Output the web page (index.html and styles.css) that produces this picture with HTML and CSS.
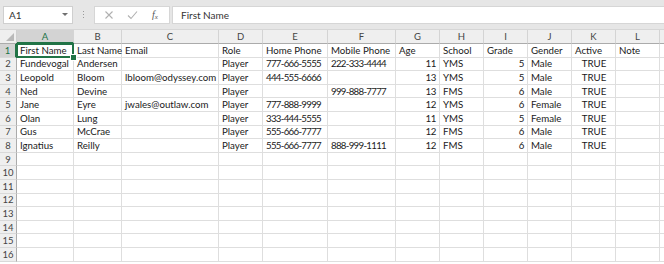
FILE: index.html
```html
<!DOCTYPE html>
<html>
<head>
<meta charset="utf-8">
<link rel="stylesheet" href="styles.css">
</head>
<body>
<div class="app">
  <div class="fbar">
    <div class="namebox"><span>A1</span><span class="caret"></span></div>
    <div class="dots"><i></i><i></i><i></i></div>
    <div class="btns">
      <svg class="ico" width="10" height="10" viewBox="0 0 10 10"><path d="M1.5 1.5L8.5 8.5M8.5 1.5L1.5 8.5" stroke="#b0b0b0" stroke-width="1.1" fill="none"/></svg>
      <svg class="ico" width="11" height="10" viewBox="0 0 11 10"><path d="M1 5.5L4 8.5L10 1.5" stroke="#b0b0b0" stroke-width="1.1" fill="none"/></svg>
      <span class="fx">f<sub>x</sub></span>
    </div>
    <div class="formula">First Name</div>
  </div>
  <div class="sheet">
    <div class="corner"><span class="tri"></span></div>
    <div class="ch sel">A</div><div class="ch">B</div><div class="ch">C</div><div class="ch">D</div><div class="ch">E</div><div class="ch">F</div><div class="ch">G</div><div class="ch">H</div><div class="ch">I</div><div class="ch">J</div><div class="ch">K</div><div class="ch">L</div><div class="ch"></div>

    <div class="rh sel">1</div><div class="c active">First Name<span class="selbox"><span class="handle"></span></span></div><div class="c">Last Name</div><div class="c">Email</div><div class="c">Role</div><div class="c">Home Phone</div><div class="c">Mobile Phone</div><div class="c">Age</div><div class="c">School</div><div class="c">Grade</div><div class="c">Gender</div><div class="c">Active</div><div class="c">Note</div><div class="c"></div>

    <div class="rh">2</div><div class="c">Fundevogal</div><div class="c">Andersen</div><div class="c"></div><div class="c">Player</div><div class="c ph">777-666-5555</div><div class="c ph">222-333-4444</div><div class="c n">11</div><div class="c">YMS</div><div class="c n">5</div><div class="c">Male</div><div class="c b">TRUE</div><div class="c"></div><div class="c"></div>

    <div class="rh">3</div><div class="c">Leopold</div><div class="c">Bloom</div><div class="c">lbloom@odyssey.com</div><div class="c">Player</div><div class="c ph">444-555-6666</div><div class="c"></div><div class="c n">13</div><div class="c">YMS</div><div class="c n">5</div><div class="c">Male</div><div class="c b">TRUE</div><div class="c"></div><div class="c"></div>

    <div class="rh">4</div><div class="c">Ned</div><div class="c">Devine</div><div class="c"></div><div class="c">Player</div><div class="c"></div><div class="c ph">999-888-7777</div><div class="c n">13</div><div class="c">FMS</div><div class="c n">6</div><div class="c">Male</div><div class="c b">TRUE</div><div class="c"></div><div class="c"></div>

    <div class="rh">5</div><div class="c">Jane</div><div class="c">Eyre</div><div class="c">jwales@outlaw.com</div><div class="c">Player</div><div class="c ph">777-888-9999</div><div class="c"></div><div class="c n">12</div><div class="c">YMS</div><div class="c n">6</div><div class="c">Female</div><div class="c b">TRUE</div><div class="c"></div><div class="c"></div>

    <div class="rh">6</div><div class="c">Olan</div><div class="c">Lung</div><div class="c"></div><div class="c">Player</div><div class="c ph">333-444-5555</div><div class="c"></div><div class="c n">11</div><div class="c">YMS</div><div class="c n">5</div><div class="c">Female</div><div class="c b">TRUE</div><div class="c"></div><div class="c"></div>

    <div class="rh">7</div><div class="c">Gus</div><div class="c">McCrae</div><div class="c"></div><div class="c">Player</div><div class="c ph">555-666-7777</div><div class="c"></div><div class="c n">12</div><div class="c">FMS</div><div class="c n">6</div><div class="c">Male</div><div class="c b">TRUE</div><div class="c"></div><div class="c"></div>

    <div class="rh">8</div><div class="c">Ignatius</div><div class="c">Reilly</div><div class="c"></div><div class="c">Player</div><div class="c ph">555-666-7777</div><div class="c ph">888-999-1111</div><div class="c n">12</div><div class="c">FMS</div><div class="c n">6</div><div class="c">Male</div><div class="c b">TRUE</div><div class="c"></div><div class="c"></div>

    <div class="rh">9</div><div class="c"></div><div class="c"></div><div class="c"></div><div class="c"></div><div class="c"></div><div class="c"></div><div class="c"></div><div class="c"></div><div class="c"></div><div class="c"></div><div class="c"></div><div class="c"></div><div class="c"></div>
    <div class="rh">10</div><div class="c"></div><div class="c"></div><div class="c"></div><div class="c"></div><div class="c"></div><div class="c"></div><div class="c"></div><div class="c"></div><div class="c"></div><div class="c"></div><div class="c"></div><div class="c"></div><div class="c"></div>
    <div class="rh">11</div><div class="c"></div><div class="c"></div><div class="c"></div><div class="c"></div><div class="c"></div><div class="c"></div><div class="c"></div><div class="c"></div><div class="c"></div><div class="c"></div><div class="c"></div><div class="c"></div><div class="c"></div>
    <div class="rh">12</div><div class="c"></div><div class="c"></div><div class="c"></div><div class="c"></div><div class="c"></div><div class="c"></div><div class="c"></div><div class="c"></div><div class="c"></div><div class="c"></div><div class="c"></div><div class="c"></div><div class="c"></div>
    <div class="rh">13</div><div class="c"></div><div class="c"></div><div class="c"></div><div class="c"></div><div class="c"></div><div class="c"></div><div class="c"></div><div class="c"></div><div class="c"></div><div class="c"></div><div class="c"></div><div class="c"></div><div class="c"></div>
    <div class="rh">14</div><div class="c"></div><div class="c"></div><div class="c"></div><div class="c"></div><div class="c"></div><div class="c"></div><div class="c"></div><div class="c"></div><div class="c"></div><div class="c"></div><div class="c"></div><div class="c"></div><div class="c"></div>
    <div class="rh">15</div><div class="c"></div><div class="c"></div><div class="c"></div><div class="c"></div><div class="c"></div><div class="c"></div><div class="c"></div><div class="c"></div><div class="c"></div><div class="c"></div><div class="c"></div><div class="c"></div><div class="c"></div>
    <div class="rh">16</div><div class="c"></div><div class="c"></div><div class="c"></div><div class="c"></div><div class="c"></div><div class="c"></div><div class="c"></div><div class="c"></div><div class="c"></div><div class="c"></div><div class="c"></div><div class="c"></div><div class="c"></div>
  </div>
</div>
</body>
</html>
```

FILE: styles.css
```css
* { box-sizing: border-box; }
html, body { margin: 0; padding: 0; }
body {
  width: 664px;
  height: 264px;
  overflow: hidden;
  background: #ffffff;
  font-family: Lato, "Liberation Sans", sans-serif;
  font-size: 9.7px;
  color: #1a1a1a;
}
.app { width: 664px; height: 264px; overflow: hidden; }

.fbar {
  height: 30px;
  background: #e6e6e6;
  display: flex;
  align-items: center;
  padding: 0 0 0 3px;
  border-bottom: 1px solid #d6d6d6;
}
.namebox {
  width: 70px;
  height: 18px;
  background: #fff;
  border: 1px solid #cfcfcf;
  display: flex;
  align-items: center;
  justify-content: space-between;
  padding: 0 4px 0 5px;
  color: #333;
  font-size: 10px;
}
.caret {
  width: 0; height: 0;
  border-left: 3px solid transparent;
  border-right: 3px solid transparent;
  border-top: 3px solid #707070;
}
.dots {
  width: 21px;
  display: flex;
  flex-direction: column;
  align-items: center;
  gap: 2px;
}
.dots i { display: block; width: 1px; height: 1px; background: #9a9a9a; }
.btns {
  width: 76px;
  height: 18px;
  background: #fff;
  border: 1px solid #d6d6d6;
  display: flex;
  align-items: center;
  padding-left: 9px;
  gap: 13px;
}
.fx {
  font-family: "Liberation Serif", serif;
  font-style: italic;
  font-size: 10px;
  color: #555;
  margin-left: 1px;
}
.fx sub { font-size: 7px; vertical-align: -1px; }
.formula {
  flex: 1;
  height: 18px;
  margin-left: 2px;
  background: #fff;
  border: 1px solid #d6d6d6;
  border-right: none;
  display: flex;
  align-items: center;
  padding-left: 8px;
  color: #333;
  font-size: 10px;
}

.sheet {
  display: grid;
  grid-template-columns: 17px 57px 48px 97px 44px 65px 68px 44px 44px 44px 44px 44px 44px 1fr;
  grid-template-rows: 14px repeat(16, 13.6px);
}
.corner, .ch, .rh {
  background: #efefef;
  color: #444;
  font-size: 9.5px;
}
.corner {
  position: relative;
  border-right: 1px solid #cfcfcf;
  border-bottom: 1px solid #ababab;
}
.tri {
  position: absolute;
  right: 2px; bottom: 2px;
  width: 0; height: 0;
  border-left: 8px solid transparent;
  border-bottom: 8px solid #b9b9b9;
}
.ch {
  display: flex;
  align-items: center;
  justify-content: center;
  border-right: 1px solid #d4d4d4;
  border-bottom: 1px solid #ababab;
}
.ch.sel {
  background: #d3d3d3;
  color: #217346;
  border-bottom: 2px solid #217346;
}
.rh {
  display: flex;
  align-items: center;
  justify-content: center;
  border-right: 1px solid #ababab;
  border-bottom: 1px solid #d9d9d9;
}
.rh.sel {
  background: #d3d3d3;
  color: #217346;
  border-right: 2px solid #217346;
}
.c {
  border-right: 1px solid #dedede;
  border-bottom: 1px solid #dedede;
  padding: 0 2px 0 3px;
  white-space: nowrap;
  overflow: visible;
  line-height: 13px;
  display: flex;
  align-items: center;
}
.c.ph { letter-spacing: -0.7px; }
.c.n { justify-content: flex-end; padding-right: 3px; letter-spacing: -0.4px; }
.c.b { justify-content: center; }
.c.active { position: relative; }
.selbox {
  position: absolute;
  left: -1px; top: -1px; right: -1px; bottom: -1px;
  border: 2px solid #217346;
  pointer-events: none;
}
.handle {
  position: absolute;
  right: -4px; bottom: -4px;
  width: 5px; height: 5px;
  background: #217346;
  outline: 1px solid #fff;
}
```
